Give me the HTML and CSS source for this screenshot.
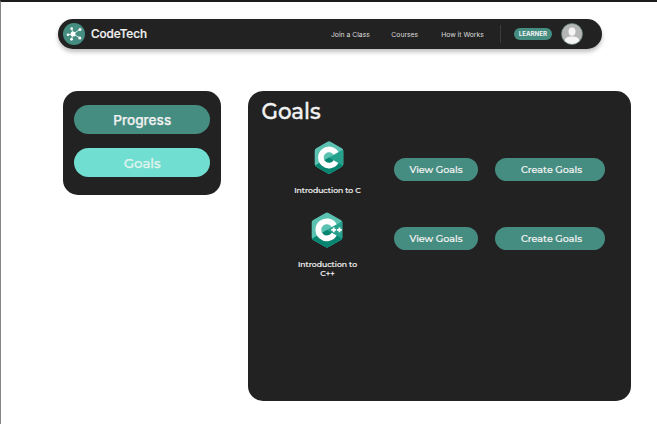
FILE: index.html
```html
<!DOCTYPE html>
<html lang="en">
<head>
<meta charset="utf-8">
<title>CodeTech</title>
<link rel="stylesheet" href="styles.css">
</head>
<body>
<header class="navbar">
  <svg class="logo" viewBox="0 0 22 22"><circle cx="11" cy="11" r="11" fill="#458d81"/><g stroke="#fff" stroke-width=".8"><path d="M10 11L8.7 5.6M10 11l6.5-4.2M10 11l6.5 3.7M10 11l-4.7.7M10 11l-1.4 5.1"/></g><g fill="#fff"><circle cx="10" cy="11" r="2.5"/><circle cx="8.7" cy="5.6" r="1.3"/><circle cx="17" cy="6.4" r="1.5"/><circle cx="16.8" cy="15" r="1.5"/><circle cx="5" cy="11.8" r="1.3"/><circle cx="8.5" cy="16.3" r="1.4"/></g></svg>
  <span class="brand">CodeTech</span>
  <nav class="links"><a>Join a Class</a><a>Courses</a><a>How it Works</a></nav>
  <span class="divider"></span>
  <span class="badge">LEARNER</span>
  <svg class="avatar" viewBox="0 0 22 22"><defs><clipPath id="face"><circle cx="11" cy="11" r="10"/></clipPath></defs><circle cx="11" cy="11" r="10.5" fill="#b5b7b6" stroke="#658b84" stroke-width=".7"/><g clip-path="url(#face)" fill="#f4f4f4"><ellipse cx="11" cy="8.6" rx="3.5" ry="4.2"/><path d="M3.5 19c0-4 3-5.4 5.5-5.6h4c2.500.2 5.500 1.600 5.500 5.600v3h-15z"/></g></svg>
</header>
<div class="content">
  <aside class="sidebar">
    <a class="tab">Progress</a>
    <a class="tab active">Goals</a>
  </aside>
  <main class="panel">
    <h1>Goals</h1>
    <section class="course">
      <div class="info">
        <svg class="icon-c" viewBox="0 0 30 33"><defs><clipPath id="hex-c"><path d="M13.500.8q1.500-.9 3 0l11.300 6.500q1.500.9 1.500 2.600v13.200q0 1.700-1.500 2.600l-11.300 6.500q-1.500.9-3 0L2.200 25.700Q.7 24.800.7 23.100V9.900q0-1.700 1.500-2.600z"/></clipPath></defs><g clip-path="url(#hex-c)"><path fill="#5bc2b2" d="M0 0h30v33H0z"/><path fill="#26a18e" d="M0 25.200L30 8v25H0z"/><path fill="#078571" d="M0 25.200L15 16.500l15 8.700V33H0z"/></g><path d="M22 12.450A8.100 8.100 0 1 0 22 20.550" fill="none" stroke="#fff" stroke-width="5.600"/></svg>
        <span class="name">Introduction to C</span>
      </div>
      <a class="button view">View Goals</a><a class="button create">Create Goals</a>
    </section>
    <section class="course second">
      <div class="info">
        <svg class="icon-cpp" viewBox="0 0 32 36"><defs><clipPath id="hex-cpp"><path d="M14.500.9q1.500-.9 3 0l12.300 7q1.500.9 1.500 2.600v15q0 1.700-1.500 2.600l-12.300 7q-1.500.9-3 0l-12.300-7Q.7 27.200.7 25.500v-15q0-1.700 1.500-2.600z"/></clipPath></defs><g clip-path="url(#hex-cpp)"><path fill="#5bc2b2" d="M0 0h32v36H0z"/><path fill="#26a18e" d="M0 27.300L32 8.700V36H0z"/><path fill="#078571" d="M0 27.300L16 18l16 9.300V36H0z"/></g><path d="M23.200 13.550A8.500 8.500 0 1 0 23.200 22.050" fill="none" stroke="#fff" stroke-width="5.700"/><path d="M20.300 17.900h4.900M22.750 15.450v4.900M26 17.900h4.900M28.450 15.450v4.900" stroke="#fff" stroke-width="1.800"/></svg>
        <span class="name">Introduction to<br>C++</span>
      </div>
      <a class="button view">View Goals</a><a class="button create">Create Goals</a>
    </section>
  </main>
</div>
</body>
</html>
```
FILE: styles.css
```css
* { box-sizing: border-box; }
body {
  margin: 0;
  height: 424px;
  padding: 17px 0 0 57.400px;
  border-top: 2px solid #1c1b1d;
  border-left: 1px solid #858585;
  background: #fff;
  color: #f2f2f2;
  font-family: Inter, sans-serif;
  overflow: hidden;
}
.navbar {
  display: flex;
  align-items: center;
  width: 544px;
  height: 30px;
  padding: 0 19px 0 5px;
  border-radius: 15px;
  background: #222;
  box-shadow: 0 3px 4px rgba(0, 0, 0, .25);
}
.logo { width: 22px; height: 22px; }
.brand { width: 240px; margin-left: 5.600px; font-size: 11.800px; font-weight: 500; letter-spacing: -.1px; -webkit-text-stroke: .2px; }
.links { display: flex; flex: 1; font-size: 6.800px; white-space: nowrap; color: #ddd; }
.links a + a { margin-left: 21.500px; }
.links a:last-child { margin-left: 23px; }
.divider { width: 1px; height: 18px; background: #3c3c3c; }
.badge {
  width: 38px;
  height: 12px;
  margin: 0 9.500px 0 12.500px;
  border-radius: 6px;
  background: #458d81;
  font-size: 6.200px;
  font-weight: 700;
  line-height: 12px;
  text-align: center;
}
.avatar { width: 22px; height: 22px; }
.content { display: flex; align-items: flex-start; gap: 27.500px; padding: 42px 0 0 5.100px; }
.sidebar {
  display: flex;
  flex-direction: column;
  gap: 14px;
  width: 157.500px;
  height: 104px;
  padding: 14px 10.500px;
  border-radius: 15px;
  background: #222;
}
.tab {
  height: 29px;
  border-radius: 15px;
  background: #458d81;
  font-size: 13.600px;
  font-weight: 500;
  line-height: 30px;
  text-align: center;
  -webkit-text-stroke: .25px;
}
.tab.active { background: #70dfd1; color: #e3f4ee; font-family: Montserrat, Inter, sans-serif; font-size: 13.300px; line-height: 31px; }
.panel {
  width: 382.500px;
  height: 310px;
  padding: 7px 13px;
  border-radius: 15px;
  background: #222;
  font-family: Montserrat, Inter, sans-serif;
}
h1 { margin: 0; font-size: 21.300px; font-weight: 500; line-height: 26px; -webkit-text-stroke: .4px; }
.course { display: flex; align-items: flex-start; padding: 17px 0 0 16px; }
.course.second { padding-top: 17px; }
.info { display: flex; flex-direction: column; align-items: center; width: 100px; margin-right: 16.500px; }
.icon-c { width: 30px; height: 33px; margin-left: 3px; }
.icon-cpp { width: 32px; height: 36px; }
.name { margin-top: 12px; font-size: 7.700px; font-weight: 500; line-height: 9px; text-align: center; white-space: nowrap; -webkit-text-stroke: .2px; }
.button {
  height: 23px;
  margin-top: 17px;
  border-radius: 12px;
  background: #458d81;
  font-size: 9.600px;
  font-weight: 500;
  line-height: 24px;
  text-align: center;
  -webkit-text-stroke: .2px;
}
.second .button { margin-top: 15px; }
.view { width: 84px; }
.create { width: 110px; margin-left: 17px; padding-left: 3px; }
```
